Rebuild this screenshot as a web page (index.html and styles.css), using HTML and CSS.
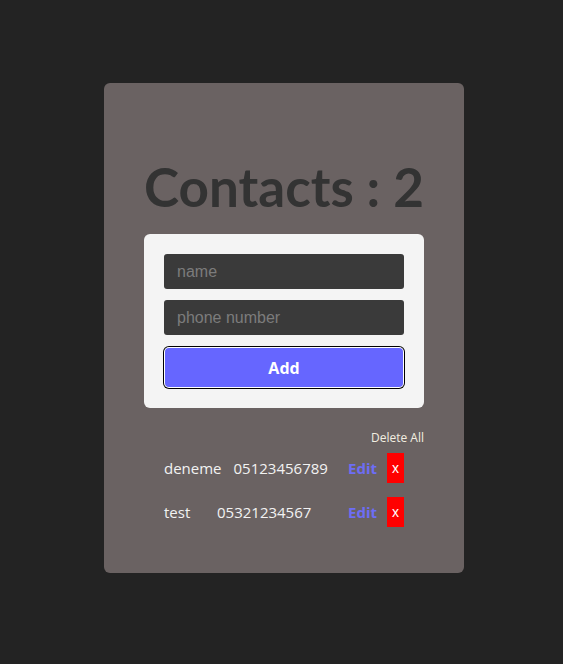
FILE: index.html
```html
<!DOCTYPE html>
<html lang="en">
<head>
<meta charset="utf-8">
<title>Contacts</title>
<link rel="stylesheet" href="styles.css">
</head>
<body>
<div class="page">
  <div class="card">
    <h1 class="title">Contacts : 2</h1>
    <form class="form-box">
      <input class="field" type="text" placeholder="name">
      <input class="field" type="text" placeholder="phone number">
      <button class="add-btn" type="button">Add</button>
    </form>
    <div class="list">
      <div class="delete-all">Delete All</div>
      <div class="row">
        <div class="info"><span class="name">deneme</span><span class="phone">05123456789</span></div>
        <div class="actions"><span class="edit">Edit</span><span class="remove">x</span></div>
      </div>
      <div class="row">
        <div class="info"><span class="name">test</span><span class="phone">05321234567</span></div>
        <div class="actions"><span class="edit">Edit</span><span class="remove">x</span></div>
      </div>
    </div>
  </div>
</div>
</body>
</html>
```
FILE: styles.css
```css
html, body {
  margin: 0;
  padding: 0;
  background: #232323;
  height: 100%;
}
body {
  font-family: "Open Sans", "Noto Sans", sans-serif;
}
.page {
  padding: 83px 0 0 104px;
}
.card {
  box-sizing: border-box;
  width: 360px;
  height: 490px;
  background: #6a6262;
  border-radius: 6px;
  padding: 70px 40px 0;
}
.title {
  margin: 0 -20px;
  height: 81px;
  font-family: "Lato", "Open Sans", sans-serif;
  font-size: 53px;
  line-height: 68px;
  font-weight: 700;
  color: #333333;
  text-align: center;
  white-space: nowrap;
}
.form-box {
  box-sizing: border-box;
  width: 280px;
  background: #f4f4f4;
  border-radius: 6px;
  padding: 20px 20px 21px;
  display: flex;
  flex-direction: column;
  margin: 0;
}
.field {
  box-sizing: border-box;
  height: 35px;
  width: 240px;
  margin: 0 0 11px;
  border: none;
  border-radius: 3px;
  background: #3a3a3a;
  padding: 0 13px;
  font-family: "Liberation Sans", Arial, sans-serif;
  font-size: 16px;
  color: #eee;
}
.field::placeholder {
  color: #7c7c7c;
}
.add-btn {
  box-sizing: border-box;
  margin: 2px 1px 0;
  width: 238px;
  height: 39px;
  border: none;
  border-radius: 4px;
  background: #6666ff;
  color: #ffffff;
  font-family: "Open Sans", "Noto Sans", sans-serif;
  font-size: 16px;
  font-weight: 700;
  box-shadow: 0 0 0 1px #ffffff, 0 0 0 2px #000000;
}
.list {
  padding-top: 22px;
}
.delete-all {
  text-align: right;
  font-size: 12px;
  line-height: 16px;
  color: #f2eee0;
  margin-bottom: 7px;
}
.row {
  display: flex;
  justify-content: space-between;
  align-items: center;
  margin: 0 20px 14px;
  height: 30px;
}
.info {
  display: flex;
  font-size: 15px;
  color: #f2f2f2;
}
.name {
  min-width: 41px;
  margin-right: 12px;
}
.actions {
  display: flex;
  align-items: center;
  gap: 10px;
}
.edit {
  color: #6d6df5;
  font-weight: 700;
  font-size: 15px;
}
.remove {
  display: flex;
  align-items: center;
  justify-content: center;
  width: 17px;
  height: 30px;
  background: #ff0000;
  color: #ffffff;
  font-family: "Liberation Sans", Arial, sans-serif;
  font-size: 14px;
}
```
